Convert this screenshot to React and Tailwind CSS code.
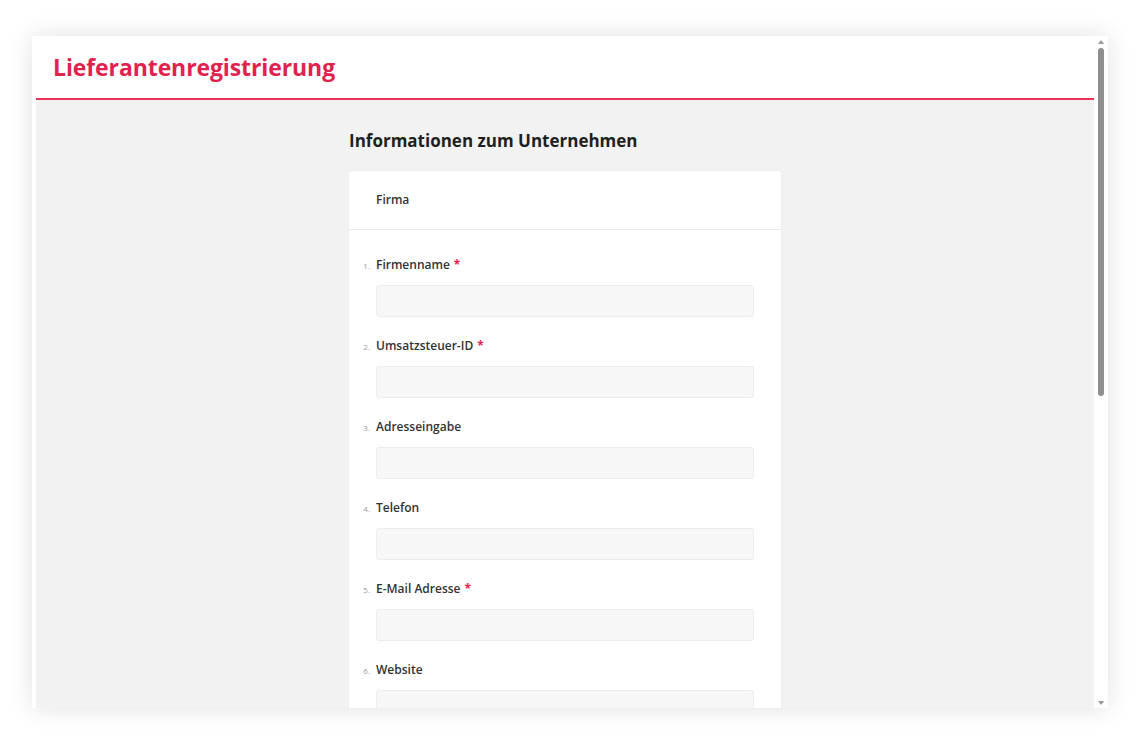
const FIELDS = [
  { label: "Firmenname", required: true },
  { label: "Umsatzsteuer-ID", required: true },
  { label: "Adresseingabe" },
  { label: "Telefon" },
  { label: "E-Mail Adresse", required: true },
  { label: "Website" },
];

export default function App() {
  return (
    <div className="w-[1140px] h-[745px] bg-white pt-[36px] pl-[32px] overflow-hidden" style={{ fontFamily: '"Open Sans", sans-serif' }}>
      <div className="w-[1076px] h-[672px] bg-white shadow-[0_0_24px_rgba(0,0,0,0.12)] flex">
        {/* page */}
        <div className="flex-1 pl-[4px] flex flex-col overflow-hidden">
          <div className="h-[64px] flex items-center pl-[17px] border-b-2 border-[#e8345a]">
            <h1 className="text-[23px] font-bold text-[#e0234e] tracking-[-0.1px]">Lieferantenregistrierung</h1>
          </div>
          <div className="flex-1 bg-[#f2f2f2] overflow-hidden">
            <div className="w-[432px] ml-[313px] pt-[29px]">
              <h2 className="text-[17px] font-bold text-[#1f1f1f] leading-[24px] mb-[18px]">Informationen zum Unternehmen</h2>
              <div className="bg-white rounded-[3px] shadow-[0_0_2px_rgba(0,0,0,0.06)]">
                <div className="h-[59px] flex items-center px-[27px] border-b border-[#ebebeb]">
                  <span className="text-[12px] font-semibold text-[#333]">Firma</span>
                </div>
                <div className="pt-[26px]">
                  {FIELDS.map((f, i) => (
                    <div key={f.label} className="h-[81px] flex flex-col">
                      <div className="flex items-baseline h-[18px]">
                        <span className="w-[27px] text-right pr-[6px] text-[8px] text-[#999]">{i + 1}.</span>
                        <span className="text-[12px] font-semibold text-[#333]">{f.label}</span>
                        {f.required && <span className="ml-[4px] text-[12px] font-bold text-[#e0234e]">*</span>}
                      </div>
                      <div className="ml-[27px] mr-[27px] mt-[11px] h-[32px] bg-[#f7f7f7] border border-[#ececec] rounded-[3px]" />
                    </div>
                  ))}
                </div>
              </div>
            </div>
          </div>
        </div>
        {/* scrollbar */}
        <div className="w-[14px] flex flex-col items-center bg-white">
          <svg width="8" height="6" viewBox="0 0 8 6" className="mt-[3px]"><path d="M4 1L7 5H1Z" fill="#9a9a9a" /></svg>
          <div className="w-[6px] h-[348px] mt-[3px] rounded-full bg-[#8f8f8f]" />
          <div className="flex-1" />
          <svg width="8" height="6" viewBox="0 0 8 6" className="mb-[2px]"><path d="M4 5L7 1H1Z" fill="#9a9a9a" /></svg>
        </div>
      </div>
    </div>
  );
}
